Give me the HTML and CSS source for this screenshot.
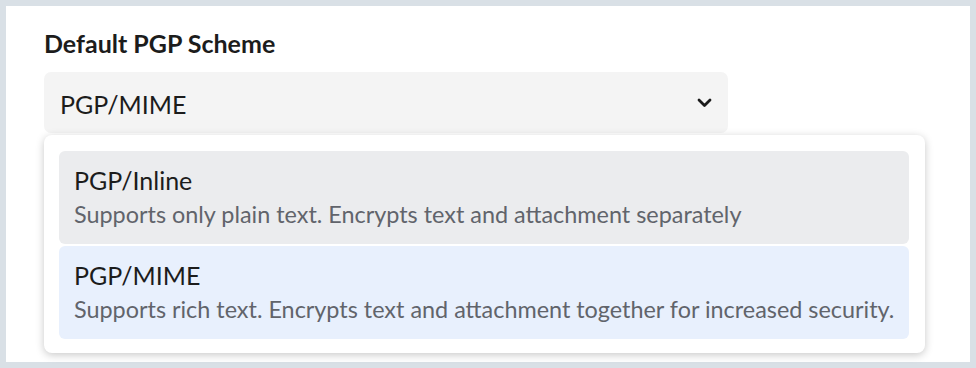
FILE: index.html
```html
<!DOCTYPE html>
<html lang="en">
<head>
    <meta charset="UTF-8">
    <title>Default PGP Scheme</title>
    <link rel="stylesheet" href="styles.css">
</head>
<body>
    <div class="panel">
        <label class="field-label">Default PGP Scheme</label>
        <div class="select-wrap">
            <div class="select-box">
                <span class="select-value">PGP/MIME</span>
                <svg class="chevron" width="15" height="10" viewBox="0 0 15 10">
                    <path d="M2 2 L7.5 7.5 L13 2" fill="none" stroke="#1b1b1b" stroke-width="2.8" stroke-linecap="round" stroke-linejoin="round"/>
                </svg>
            </div>

            <!-- Dropdown menu -->
            <div class="menu">
                <div class="menu-item hovered">
                    <div class="item-title">PGP/Inline</div>
                    <div class="item-desc">Supports only plain text. Encrypts text and attachment separately</div>
                </div>
                <div class="menu-item selected">
                    <div class="item-title">PGP/MIME</div>
                    <div class="item-desc">Supports rich text. Encrypts text and attachment together for increased security.</div>
                </div>
            </div>
        </div>
    </div>
</body>
</html>
```

FILE: styles.css
```css
/* General Styling */
body {
    margin: 0;
    padding: 6px;
    height: 368px;
    box-sizing: border-box;
    background: #d9e0e6;
    font-family: 'Lato', sans-serif;
    overflow: hidden;
}

.panel {
    background: #fff;
    height: 356px;
    box-sizing: border-box;
    padding: 22px 38px 0;
}

.field-label {
    display: block;
    font-size: 25px;
    font-weight: 700;
    color: #1c1c1c;
    line-height: 30px;
    margin-bottom: 14px;
}

.select-wrap {
    position: relative;
}

.select-box {
    width: 684px;
    height: 61px;
    box-sizing: border-box;
    background: #f4f4f4;
    border-radius: 7px;
    padding: 2px 16px 0;
    display: flex;
    align-items: center;
    justify-content: space-between;
}

.select-value {
    font-size: 25px;
    line-height: 30px;
    color: #1c1c1c;
}

.chevron {
    margin-top: -2px;
}

/* Dropdown */
.menu {
    position: absolute;
    top: 63px;
    left: 0;
    width: 881px;
    box-sizing: border-box;
    background: #fff;
    border-radius: 8px;
    box-shadow: 0 2px 8px rgba(0, 0, 0, 0.22);
    padding: 16px 16px 14px 15px;
    display: flex;
    flex-direction: column;
    gap: 2px;
}

.menu-item {
    height: 93px;
    box-sizing: border-box;
    border-radius: 6px;
    padding: 14px 12px 0 15px;
}

.menu-item.hovered {
    background: #ebecee;
}

.menu-item.selected {
    background: #e8f0fd;
}

.item-title {
    font-size: 25px;
    line-height: 30px;
    color: #1c1c1c;
}

.item-desc {
    font-size: 23.4px;
    line-height: 28px;
    color: #61646b;
    margin-top: 5px;
    white-space: nowrap;
}
```
